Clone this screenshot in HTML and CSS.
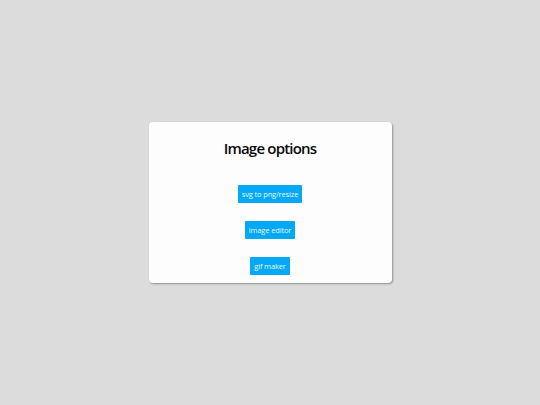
FILE: index.html
```html
<!DOCTYPE html>
<html>
<head>
<meta charset="utf-8">
<link rel="stylesheet" href="styles.css">
</head>
<body>
<div class="card">
  <h1 class="title">Image options</h1>
  <div class="buttons">
    <button class="btn">svg to png/resize</button>
    <button class="btn">image editor</button>
    <button class="btn">gif maker</button>
  </div>
</div>
</body>
</html>
```
FILE: styles.css
```css
html, body { margin: 0; padding: 0; }
body {
  width: 540px;
  height: 405px;
  background: #dcdcdc;
  display: flex;
  align-items: center;
  justify-content: center;
  font-family: "Open Sans", sans-serif;
}
.card {
  width: 243px;
  height: 161px;
  box-sizing: border-box;
  background: #fdfdfd;
  border-radius: 4px;
  box-shadow: 1px 1px 2px rgba(0,0,0,0.35);
  display: flex;
  flex-direction: column;
  align-items: center;
  padding-top: 15px;
}
.title {
  margin: 0;
  font-size: 15px;
  font-weight: 600;
  letter-spacing: -0.8px;
  line-height: 22px;
  color: #0a0a0a;
}
.buttons {
  display: flex;
  flex-direction: column;
  align-items: center;
  gap: 18px;
  margin-top: 26px;
}
.btn {
  font-family: "Open Sans", sans-serif;
  font-size: 7.5px;
  letter-spacing: -0.15px;
  line-height: 18px;
  height: 18px;
  padding: 0 4px;
  border: none;
  border-radius: 1px;
  background: #03a9f4;
  color: #e8f6fe;
}
```
